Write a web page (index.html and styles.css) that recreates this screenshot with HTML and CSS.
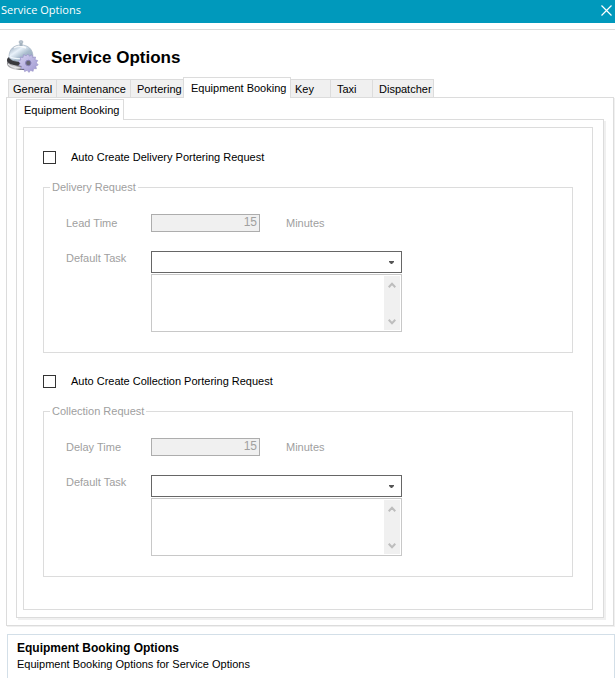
FILE: index.html
```html
<!DOCTYPE html>
<html lang="en">
<head>
<meta charset="utf-8">
<title>Service Options</title>
<link rel="stylesheet" href="styles.css">
</head>
<body>
<div class="window">
  <header class="titlebar">
    <span>Service Options</span>
    <button class="close" type="button" aria-label="Close">
      <svg width="11" height="11" viewBox="0 0 11 11"><path d="M.5 .5l10 10M10.5 .5l-10 10" stroke="#fff" stroke-width="1.2"/></svg>
    </button>
  </header>
  <main class="content">
    <div class="heading">
      <svg class="bell" width="34" height="34" viewBox="0 0 34 34" aria-hidden="true">
        <defs>
          <linearGradient id="dome" x1="0" y1="0" x2="1" y2="1">
            <stop offset="0" stop-color="#8196ac"/><stop offset=".35" stop-color="#e9f2fa"/>
            <stop offset=".6" stop-color="#a9bccd"/><stop offset="1" stop-color="#8ea2b5"/>
          </linearGradient>
          <linearGradient id="base" x1="0" y1="0" x2="1" y2="0">
            <stop offset="0" stop-color="#8c8c90"/><stop offset=".3" stop-color="#d4d4d8"/>
            <stop offset=".6" stop-color="#3c3c40"/><stop offset="1" stop-color="#222"/>
          </linearGradient>
          <linearGradient id="gear" x1="0" y1="0" x2="1" y2="1">
            <stop offset="0" stop-color="#d8d4f2"/><stop offset="1" stop-color="#9d96d0"/>
          </linearGradient>
        </defs>
        <path d="M1 20v4c1 4 7 6 14 6s13-2 14-6v-4z" fill="url(#base)"/>
        <ellipse cx="15" cy="20" rx="14" ry="6" fill="#39393d"/>
        <path d="M2 24c4 4 9 4 14 4" fill="none" stroke="#e3e3e6" stroke-width="1.2"/>
        <path d="M3 17C3 9 8 5 15 5s12 4 12 12c-1 3-6 4.500-12 4.500S4 20 3 17z" fill="url(#dome)" stroke="#a3b2c1" stroke-width=".7"/>
        <path d="M3.500 16.500c4 3 19 3 23 0" fill="none" stroke="#eef5fb" stroke-width="1.200"/>
        <path d="M8 8c3-2 8-2 12 0" fill="none" stroke="#fff" stroke-width="1.500" opacity=".8"/>
        <rect x="13.500" y="2" width="3" height="4" fill="#a3b1be"/>
        <ellipse cx="15" cy="2" rx="2" ry="1.400" fill="#b9c5d0" stroke="#a0adba" stroke-width=".6"/>
        <path d="M22 14l1.500 2.200 2.500-1.500.5 2.600 3-.3-.5 2.800 2.700.7-1.400 2.300 1.900 2.100-2.500 1.100.7 2.700-2.900-.1-.4 2.700-2.600-1-1.500 2.100-1.900-2.100-2.500 1.300-.6-2.700-3 .2.500-2.800-2.700-.7 1.400-2.400-1.900-2.100 2.500-1.100-.6-2.700 2.900.1.400-2.700 2.700 1z" fill="url(#gear)" stroke="#9a94c8" stroke-width=".7"/>
        <circle cx="22.300" cy="23" r="2.700" fill="#646471" stroke="#8780ba"/>
      </svg>
      <h1>Service Options</h1>
    </div>

    <nav class="tabs" role="tablist">
      <button class="tab general" type="button" role="tab">General</button>
      <button class="tab maintenance" type="button" role="tab">Maintenance</button>
      <button class="tab portering" type="button" role="tab">Portering</button>
      <button class="tab active" type="button" role="tab" aria-selected="true">Equipment Booking</button>
      <button class="tab key" type="button" role="tab">Key</button>
      <button class="tab taxi" type="button" role="tab">Taxi</button>
      <button class="tab dispatcher" type="button" role="tab">Dispatcher</button>
    </nav>

    <div class="panel outer">
      <div class="subtabs" role="tablist">
        <button class="tab active" type="button" role="tab" aria-selected="true">Equipment Booking</button>
      </div>
      <div class="panel inner">
        <form class="sheet">
          <label class="check"><input type="checkbox">Auto Create Delivery Portering Request</label>
          <fieldset>
            <legend>Delivery Request</legend>
            <div class="row time">
              <label for="lead">Lead Time</label>
              <input id="lead" type="text" value="15" disabled>
              <span class="unit">Minutes</span>
            </div>
            <div class="row task">
              <label for="delivery-task">Default Task</label>
              <div class="fields">
                <div class="combo">
                  <select id="delivery-task"><option></option></select>
                  <svg width="5" height="3" viewBox="0 0 5 3"><path d="M0 0h5v1L3 3H2L0 1z" fill="#555"/></svg>
                </div>
                <div class="memo">
                  <textarea aria-label="Delivery task details" disabled></textarea>
                  <div class="scroll">
                    <svg width="8" height="6" viewBox="0 0 8 6"><path d="M.7 5.200L4 1.800l3.300 3.400" fill="none" stroke="#bdbdbd" stroke-width="2"/></svg>
                    <svg width="8" height="6" viewBox="0 0 8 6"><path d="M.7 .8L4 4.200 7.300 .8" fill="none" stroke="#bdbdbd" stroke-width="2"/></svg>
                  </div>
                </div>
              </div>
            </div>
          </fieldset>

          <label class="check"><input type="checkbox">Auto Create Collection Portering Request</label>
          <fieldset>
            <legend>Collection Request</legend>
            <div class="row time">
              <label for="delay">Delay Time</label>
              <input id="delay" type="text" value="15" disabled>
              <span class="unit">Minutes</span>
            </div>
            <div class="row task">
              <label for="collection-task">Default Task</label>
              <div class="fields">
                <div class="combo">
                  <select id="collection-task"><option></option></select>
                  <svg width="5" height="3" viewBox="0 0 5 3"><path d="M0 0h5v1L3 3H2L0 1z" fill="#555"/></svg>
                </div>
                <div class="memo">
                  <textarea aria-label="Collection task details" disabled></textarea>
                  <div class="scroll">
                    <svg width="8" height="6" viewBox="0 0 8 6"><path d="M.7 5.200L4 1.800l3.300 3.400" fill="none" stroke="#bdbdbd" stroke-width="2"/></svg>
                    <svg width="8" height="6" viewBox="0 0 8 6"><path d="M.7 .8L4 4.200 7.300 .8" fill="none" stroke="#bdbdbd" stroke-width="2"/></svg>
                  </div>
                </div>
              </div>
            </div>
          </fieldset>
        </form>
      </div>
    </div>
  </main>
  <footer class="hint">
    <h2>Equipment Booking Options</h2>
    <p>Equipment Booking Options for Service Options</p>
  </footer>
</div>
</body>
</html>
```
FILE: styles.css
```css
* { box-sizing: border-box; }

body {
  margin: 0;
  background: #fff;
  color: #000;
  font: 11px/14px "Liberation Sans", Arial, sans-serif;
}

button, input, select, textarea { font: inherit; color: inherit; }
svg { display: block; }

.window { display: flex; flex-direction: column; min-height: 100vh; }

.titlebar {
  display: flex;
  justify-content: space-between;
  align-items: center;
  height: 23px;
  padding: 0 3px 3px 1px;
  background: #0099bc;
  color: #fff;
  font: 11px/16px "Open Sans", sans-serif;
}

.close { padding: 0; border: 0; background: none; }

.content {
  margin-top: 6px;
  padding: 9px 1px 0 6px;
  border-top: 1px solid #dcdcdc;
}

.heading { display: flex; align-items: center; height: 38px; gap: 11px; }
.heading h1 { margin: 0; font-size: 17px; line-height: 20px; }
.bell { flex: none; margin-bottom: 3px; }

.tabs, .subtabs { display: flex; align-items: flex-end; }
.tabs { height: 21px; padding-left: 2px; margin-bottom: -1px; }

.tab {
  height: 19px;
  padding: 1px 0 0 4px;
  border: 1px solid #dcdcdc;
  border-left: 0;
  background: #f0f0f0;
  line-height: 16px;
  text-align: left;
  white-space: nowrap;
}

.general { width: 49px; border-left: 1px solid #dcdcdc; }
.maintenance { width: 74px; padding-left: 6px; }
.portering { width: 53px; padding-left: 6px; }
.key { width: 40px; }
.taxi { width: 42px; padding-left: 6px; }
.dispatcher { width: 61px; padding-left: 6px; }

.tab.active {
  position: relative;
  width: 108px;
  height: 21px;
  padding: 0 0 1px 7px;
  border-left: 1px solid #dcdcdc;
  border-bottom: 0;
  background: #fff;
}
.tabs .active { margin-left: -1px; }

.panel { border: 1px solid #dcdcdc; }
.outer { padding: 1px 9px 7px; box-shadow: 1px 1px 0 #f0f0f0; }
.inner { margin-top: -1px; padding: 7px 10px 7px 6px; box-shadow: 2px 2px 0 #f0f0f0; }

.sheet { padding: 22px 19px 32px; border: 1px solid #dcdcdc; }

.check { display: flex; align-items: center; gap: 15px; height: 14px; }
.check input {
  appearance: none;
  width: 13px;
  height: 13px;
  margin: 0;
  border: 1px solid #333;
  background: #fff;
}
.check input:checked { background: #333; }

fieldset {
  min-width: 0;
  margin: 16px 0 0;
  padding: 20px 22px;
  border: 1px solid #dcdcdc;
  color: #a0a0a0;
}
fieldset + .check { margin-top: 21px; }
legend { margin-left: -16px; padding: 0 2px; }

.row { display: grid; grid-template-columns: 85px minmax(0, 251px); }
.time { grid-template-columns: 85px 109px auto; align-items: center; }
.time input {
  width: 100%;
  height: 18px;
  padding: 0 2px 2px;
  border: 1px solid #adadad;
  background: #f0f0f0;
  text-align: right;
  font-size: 12px;
}
.unit { margin-left: 26px; }
.task { margin-top: 19px; }

.fields { display: grid; gap: 1px; }
.combo { position: relative; height: 22px; }
.combo select {
  appearance: none;
  width: 100%;
  height: 100%;
  padding: 0 20px 0 4px;
  border: 1px solid #666;
  border-radius: 0;
  background: #fff;
  color: #000;
}
.combo svg { position: absolute; right: 8px; top: 10px; pointer-events: none; }

.memo { display: flex; height: 58px; padding: 1px; border: 1px solid #c8c8c8; }
.memo textarea { flex: 1; min-width: 0; border: 0; background: #fff; resize: none; }
.scroll {
  display: flex;
  flex-direction: column;
  justify-content: space-between;
  align-items: center;
  width: 16px;
  padding: 6px 0 5px;
  background: #f0f0f0;
}

.hint {
  flex: 1;
  margin: 8px 0 0 7px;
  padding: 5px 9px 0;
  border: 1px solid #d3dfe8;
  border-bottom: 0;
}
.hint h2 { margin: 0; font-size: 12px; line-height: 16px; }
.hint p { margin: 0; line-height: 16px; }
```
